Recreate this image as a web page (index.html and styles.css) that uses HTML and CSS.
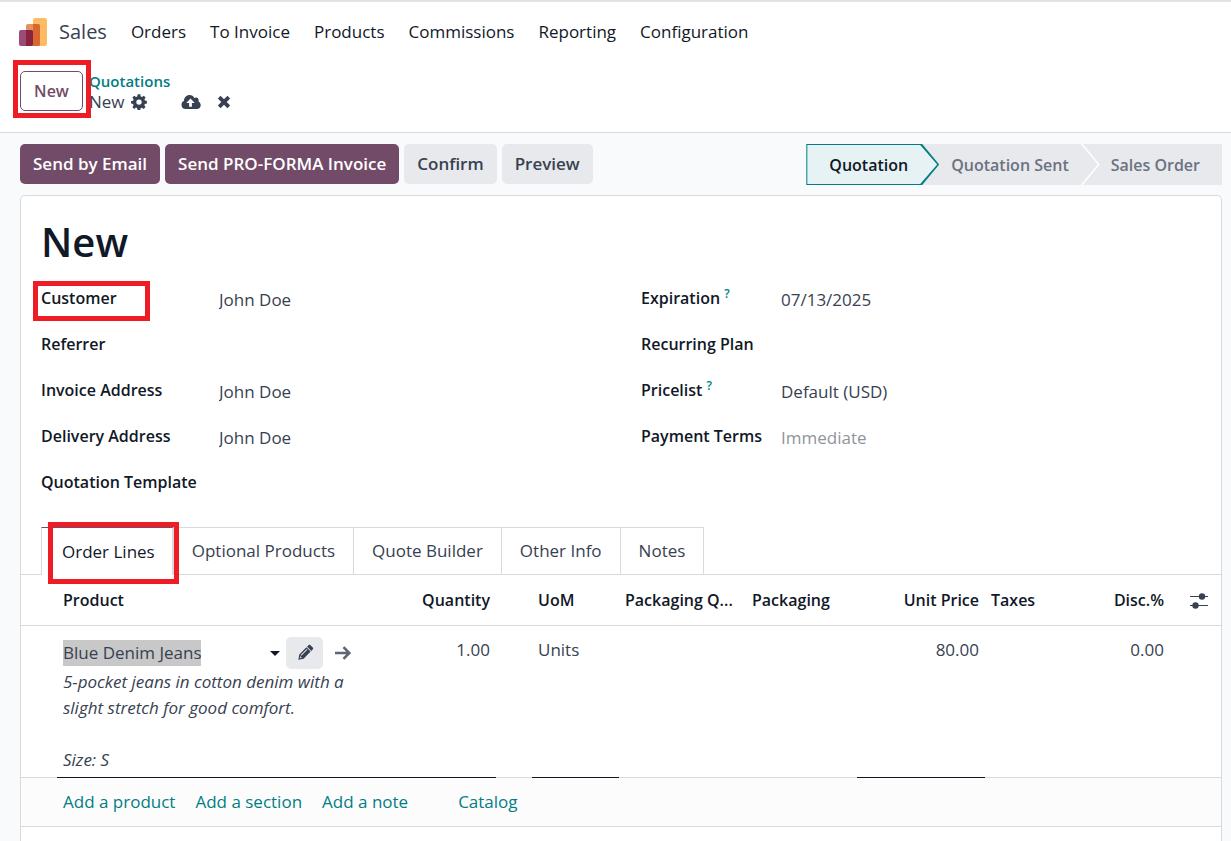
FILE: index.html
```html
<!DOCTYPE html>
<html lang="en">
<head>
<meta charset="utf-8">
<meta name="viewport" content="width=device-width, initial-scale=1">
<title>New - Quotations</title>
<link rel="stylesheet" href="styles.css">
</head>
<body>
<header class="top">
  <nav class="navbar">
    <a class="brand" href="#">
      <svg class="brand-logo" viewBox="0 0 30 30" aria-hidden="true">
        <rect x="15" y="1" width="14" height="28" rx="2" fill="#fdbb63"/>
        <rect x="8" y="7" width="14" height="22" rx="2" fill="#e2945b"/>
        <path d="M15 7h5a2 2 0 0 1 2 2v18a2 2 0 0 1-2 2h-5z" fill="#d9672f"/>
        <rect x="1" y="13" width="14" height="16" rx="2" fill="#9c4a77"/>
        <path d="M8 13h5a2 2 0 0 1 2 2v12a2 2 0 0 1-2 2H8z" fill="#8a2340"/>
      </svg>
      <span>Sales</span>
    </a>
    <a class="nav-link" href="#">Orders</a>
    <a class="nav-link" href="#">To Invoice</a>
    <a class="nav-link" href="#">Products</a>
    <a class="nav-link" href="#">Commissions</a>
    <a class="nav-link" href="#">Reporting</a>
    <a class="nav-link" href="#">Configuration</a>
  </nav>
  <div class="control-panel">
    <div class="marked">
      <button class="btn-new" type="button">New</button>
      <span class="callout callout-new"></span>
    </div>
    <div class="crumbs">
      <a class="crumb-link" href="#">Quotations</a>
      <div class="crumb-row">
        <span>New</span>
        <button class="icon-btn gear" type="button" aria-label="Actions">
          <svg width="16" height="16" viewBox="0 0 16 16"><path fill="currentColor" fill-rule="evenodd" d="M6.700.3h2.600l.4 2.100 1.300.6 1.800-1.300 1.800 1.800L13.400 5.300l.5 1.300 2 .4v2.600l-2 .4-.6 1.300 1.200 1.800-1.800 1.800-1.800-1.200-1.300.5-.4 2.100H6.600l-.4-2.100-1.200-.6-1.800 1.300-1.800-1.800 1.200-1.800-.6-1.300-1.900-.4V7.100l2-.4.5-1.300-1.200-1.800 1.800-1.800L5 3l1.300-.6zM8 5.400a2.700 2.700 0 1 0 0 5.400 2.700 2.700 0 0 0 0-5.400z"/></svg>
        </button>
        <button class="icon-btn cloud" type="button" aria-label="Save manually">
          <svg width="20" height="16" viewBox="0 0 20 16"><path fill="currentColor" fill-rule="evenodd" d="M4.700 15A4.400 4.400 0 0 1 .5 10.700c0-1.700 1-3.200 2.500-3.900C3 3.500 5.500 1 8.500 1c2.200 0 4 1.200 4.900 3.100.5-.4 1.100-.6 1.700-.6 1.500 0 2.600 1.200 2.600 2.700 0 .5-.1 1-.3 1.400 1.400.5 2.300 2 2.300 3.600C19.700 13.400 18 15 16 15zM9.500 4.600 5.300 8.900h2.800v3.900h2.800V8.900h2.800z"/></svg>
        </button>
        <button class="icon-btn" type="button" aria-label="Discard changes">
          <svg width="14" height="14" viewBox="0 0 14 14"><path fill="none" stroke="currentColor" stroke-width="3.800" d="M2.200 2.200l9.600 9.600M11.800 2.200l-9.600 9.600"/></svg>
        </button>
      </div>
    </div>
  </div>
</header>

<main class="content">
  <div class="action-bar">
    <div class="actions">
      <button class="btn primary" type="button">Send by Email</button>
      <button class="btn primary" type="button">Send PRO-FORMA Invoice</button>
      <button class="btn" type="button">Confirm</button>
      <button class="btn" type="button">Preview</button>
    </div>
    <div class="steps">
      <button class="step current" type="button"><span>Quotation</span></button>
      <button class="step sent" type="button">Quotation Sent</button>
      <button class="step last" type="button">Sales Order</button>
    </div>
  </div>

  <section class="sheet">
    <h1 class="title">New</h1>
    <div class="groups">
      <div class="group">
        <div class="marked label-cell"><label for="customer">Customer</label><span class="callout callout-customer"></span></div>
        <input class="value" id="customer" type="text" value="John Doe">
        <label class="label-cell" for="referrer">Referrer</label>
        <input class="value" id="referrer" type="text">
        <label class="label-cell" for="invoice">Invoice Address</label>
        <input class="value" id="invoice" type="text" value="John Doe">
        <label class="label-cell" for="delivery">Delivery Address</label>
        <input class="value" id="delivery" type="text" value="John Doe">
        <label class="label-cell" for="template">Quotation Template</label>
        <input class="value" id="template" type="text">
      </div>
      <div class="group narrow">
        <label class="label-cell" for="expiration">Expiration <sup>?</sup></label>
        <input class="value" id="expiration" type="text" value="07/13/2025">
        <label class="label-cell" for="plan">Recurring Plan</label>
        <input class="value" id="plan" type="text">
        <label class="label-cell" for="pricelist">Pricelist <sup>?</sup></label>
        <input class="value" id="pricelist" type="text" value="Default (USD)">
        <label class="label-cell" for="terms">Payment Terms</label>
        <input class="value" id="terms" type="text" placeholder="Immediate">
      </div>
    </div>

    <div class="tabs" role="tablist">
      <div class="marked">
        <button class="tab active" type="button" role="tab" aria-selected="true">Order Lines</button>
        <span class="callout callout-tab"></span>
      </div>
      <button class="tab" type="button" role="tab">Optional Products</button>
      <button class="tab" type="button" role="tab">Quote Builder</button>
      <button class="tab" type="button" role="tab">Other Info</button>
      <button class="tab" type="button" role="tab">Notes</button>
    </div>

    <table class="lines">
      <colgroup>
        <col class="c-handle"><col><col class="c-qty"><col class="c-handle"><col class="c-uom"><col class="c-pqty"><col class="c-pack"><col class="c-price"><col class="c-tax"><col class="c-disc"><col class="c-opt">
      </colgroup>
      <thead>
        <tr>
          <th></th>
          <th>Product</th>
          <th class="num">Quantity</th>
          <th></th>
          <th>UoM</th>
          <th>Packaging Q...</th>
          <th>Packaging</th>
          <th class="num">Unit Price</th>
          <th>Taxes</th>
          <th class="num">Disc.%</th>
          <th class="opt">
            <button class="icon-btn" type="button" aria-label="Optional columns">
              <svg width="20" height="16" viewBox="0 0 20 16"><path stroke="currentColor" d="M1 3.500h18M1 12.500h18"/><circle cx="13" cy="3.500" r="3.200" fill="currentColor"/><circle cx="6.500" cy="12.500" r="3.200" fill="currentColor"/></svg>
            </button>
          </th>
        </tr>
      </thead>
      <tbody>
        <tr>
          <td></td>
          <td class="edit">
            <div class="product">
              <input class="product-name" type="text" value="Blue Denim Jeans" aria-label="Product">
              <span class="caret"></span>
              <button class="pencil" type="button" aria-label="Edit product">
                <svg width="18" height="18" viewBox="0 0 18 18"><g transform="rotate(45 9 9)" fill="currentColor"><path d="M6 1.200C6 .3 6.500-.4 7.400-.4h3.200c.9 0 1.400.7 1.400 1.600V3H6z"/><path fill-rule="evenodd" d="M6 4h6v10l-3 4.500L6 14zM7.400 5v8.500h.9V5zM8 14.500l.6 1.500h.8l.6-1.500z"/></g></svg>
              </button>
              <button class="icon-btn arrow" type="button" aria-label="Open product">
                <svg width="18" height="14" viewBox="0 0 18 14"><path fill="none" stroke="currentColor" stroke-width="2.600" d="M1 7h14M9.500 1.200 15.300 7l-5.800 5.800"/></svg>
              </button>
            </div>
            <textarea class="description" rows="4" aria-label="Description">5-pocket jeans in cotton denim with a
slight stretch for good comfort.

Size: S</textarea>
          </td>
          <td class="edit"><input class="cell num" type="text" value="1.00" aria-label="Quantity"></td>
          <td></td>
          <td class="edit"><input class="cell" type="text" value="Units" aria-label="UoM"></td>
          <td></td>
          <td></td>
          <td class="edit"><input class="cell num" type="text" value="80.00" aria-label="Unit price"></td>
          <td></td>
          <td><input class="cell num" type="text" value="0.00" aria-label="Discount"></td>
          <td></td>
        </tr>
      </tbody>
      <tfoot>
        <tr>
          <td></td>
          <td colspan="10">
            <div class="adders">
              <a href="#">Add a product</a>
              <a href="#">Add a section</a>
              <a href="#">Add a note</a>
              <a class="catalog" href="#">Catalog</a>
            </div>
          </td>
        </tr>
      </tfoot>
    </table>
  </section>
</main>
</body>
</html>
```

FILE: styles.css
```css
* { box-sizing: border-box; }

body {
  margin: 0;
  height: 100vh;
  display: flex;
  flex-direction: column;
  overflow: hidden;
  background: #f9fafb;
  color: #374151;
  font: 17px/26px "Open Sans", "Noto Sans", sans-serif;
}

button, input, textarea {
  font: inherit;
  color: inherit;
  margin: 0;
  padding: 0;
  border: 0;
  background: none;
  outline: 0;
}

button { cursor: pointer; white-space: nowrap; }
a { color: #017e84; text-decoration: none; }
svg { display: block; }

/* Header */
.top {
  background: #fff;
  border-top: 2px solid #e2e2e2;
  border-bottom: 1px solid #d8dadd;
}

.navbar {
  display: flex;
  align-items: center;
  gap: 24px;
  height: 60px;
  padding: 0 18px;
}

.brand {
  display: flex;
  align-items: center;
  gap: 11px;
  color: #374151;
  font-size: 20px;
}

.brand-logo { width: 30px; height: 30px; }
.nav-link { color: #111827; }

.control-panel {
  display: flex;
  align-items: flex-start;
  gap: 6px;
  height: 70px;
  padding: 9px 20px 0;
}

.btn-new {
  width: 63px;
  height: 40px;
  border: 1px solid #714b67;
  border-radius: 5px;
  color: #714b67;
  font-size: 16px;
  font-weight: 600;
}

.crumbs { line-height: 20px; }
.crumb-link { font-size: 15px; font-weight: 600; }
.crumb-row { display: flex; align-items: center; padding-top: 1px; }
.icon-btn { display: inline-flex; vertical-align: middle; color: #374151; }
.gear { margin-left: 6px; }
.cloud { margin: 0 16px 0 34px; }

/* Highlight frames */
.marked { position: relative; }

.callout {
  position: absolute;
  z-index: 2;
  border: 5px solid #ee1c25;
  pointer-events: none;
}

.callout-new { inset: -11px -8px -7px -7px; }
.callout-customer { left: -8px; top: -4px; width: 117px; height: 40px; }
.callout-tab { inset: -5px -5px -10px 7px; }

/* Action bar */
.content {
  flex: 1;
  display: flex;
  flex-direction: column;
  padding: 11px 9px 0 20px;
}

.action-bar { display: flex; justify-content: space-between; }
.actions { display: flex; gap: 5px; }

.btn {
  height: 40px;
  padding: 0 13px;
  border-radius: 5px;
  background: #e7e9ed;
  font-weight: 600;
}

.primary { background: #714b67; color: #fff; }

.steps { display: flex; }

.step {
  position: relative;
  height: 41px;
  background: #e7e9ed;
  color: #6b7280;
  font-size: 16px;
  font-weight: 600;
}

.current, .current::before, .sent, .sent::before {
  clip-path: polygon(0 0, calc(100% - 17px) 0, 100% 50%, calc(100% - 17px) 100%, 0 100%);
}

.current {
  z-index: 3;
  padding: 0 31px 0 23px;
  background: #017e84;
  color: #111827;
}

.current::before {
  content: "";
  position: absolute;
  inset: 1px 2px 1px 1px;
  background: #e6f2f3;
}

.current span { position: relative; }
.sent { z-index: 2; margin-left: -18px; padding: 0 31px 0 30px; background: #fff; }

.sent::before {
  content: "";
  position: absolute;
  z-index: -1;
  inset: 0 2px 0 0;
  background: #e7e9ed;
}

.last { z-index: 1; margin-left: -18px; padding: 0 22px 0 29px; }

/* Form sheet */
.sheet {
  flex: 1;
  margin-top: 10px;
  border: 1px solid #d8dadd;
  border-bottom: 0;
  border-radius: 5px 5px 0 0;
  background: #fff;
}

.title {
  margin: 0;
  padding: 20px 20px 17px;
  color: #111827;
  font-size: 40px;
  font-weight: 600;
  line-height: 52px;
}

.groups {
  display: grid;
  grid-template-columns: 1fr 1fr;
  padding: 0 20px;
  margin-bottom: 12px;
}

.group {
  display: grid;
  grid-template-columns: 178px 1fr;
  grid-auto-rows: 46px;
  align-content: start;
}

.narrow { grid-template-columns: 140px 1fr; padding-left: 20px; }
.label-cell { color: #111827; font-size: 16px; font-weight: 600; white-space: nowrap; }
.label-cell sup { color: #017e84; font-size: 12px; line-height: 1; }
.value { height: 28px; min-width: 0; }
.value::placeholder { color: #8f9499; opacity: 1; }

/* Tabs */
.tabs {
  display: flex;
  padding-left: 20px;
  border-bottom: 1px solid #d8dadd;
}

.tab {
  height: 47px;
  padding: 0 18px;
  border: 1px solid #d8dadd;
  border-width: 1px 1px 0 0;
}

.active {
  height: 48px;
  margin-bottom: -1px;
  padding: 0 17px 0 20px;
  border-width: 1px 2px 0 1px;
  border-top-color: #714b67;
  background: #fff;
  color: #111827;
}

/* Order lines */
.lines { width: 100%; table-layout: fixed; border-collapse: collapse; }
.c-handle { width: 36px; }
.c-qty { width: 139px; }
.c-uom { width: 87px; }
.c-pqty { width: 127px; }
.c-pack { width: 111px; }
.c-price { width: 128px; }
.c-tax { width: 90px; }
.c-disc { width: 95px; }
.c-opt { width: 51px; }

th, td { padding: 0 6px; text-align: left; vertical-align: top; }

th {
  height: 50px;
  border-bottom: 1px solid #d8dadd;
  color: #111827;
  font-size: 16px;
  font-weight: 600;
  vertical-align: middle;
  white-space: nowrap;
}

.num { text-align: right; }
.opt { padding: 0 10px 0 19px; }

tbody td { padding-top: 11px; border-bottom: 1px solid #d8dadd; }
tbody .edit { border-bottom-color: #111827; }
.cell { display: block; width: 100%; height: 26px; }

.product { display: flex; align-items: center; height: 32px; }
.product-name { width: 138px; height: 26px; background: #c8c8c8; }

.caret {
  margin: 2px 6px 0 auto;
  border: 5px solid transparent;
  border-top-color: #111827;
  border-bottom: 0;
}

.pencil {
  display: flex;
  align-items: center;
  justify-content: center;
  width: 37px;
  height: 32px;
  border-radius: 5px;
  background: #e7e9ed;
}

.arrow { margin: 0 -1px 0 11px; color: #5f6673; }

.description {
  display: block;
  width: 100%;
  height: 108px;
  overflow: hidden;
  resize: none;
  font-style: italic;
  white-space: pre;
}

tfoot td { height: 49px; border-bottom: 1px solid #d8dadd; background: #fcfcfc; vertical-align: middle; }
.adders { display: flex; gap: 20px; }
.catalog { margin-left: 30px; }
```
